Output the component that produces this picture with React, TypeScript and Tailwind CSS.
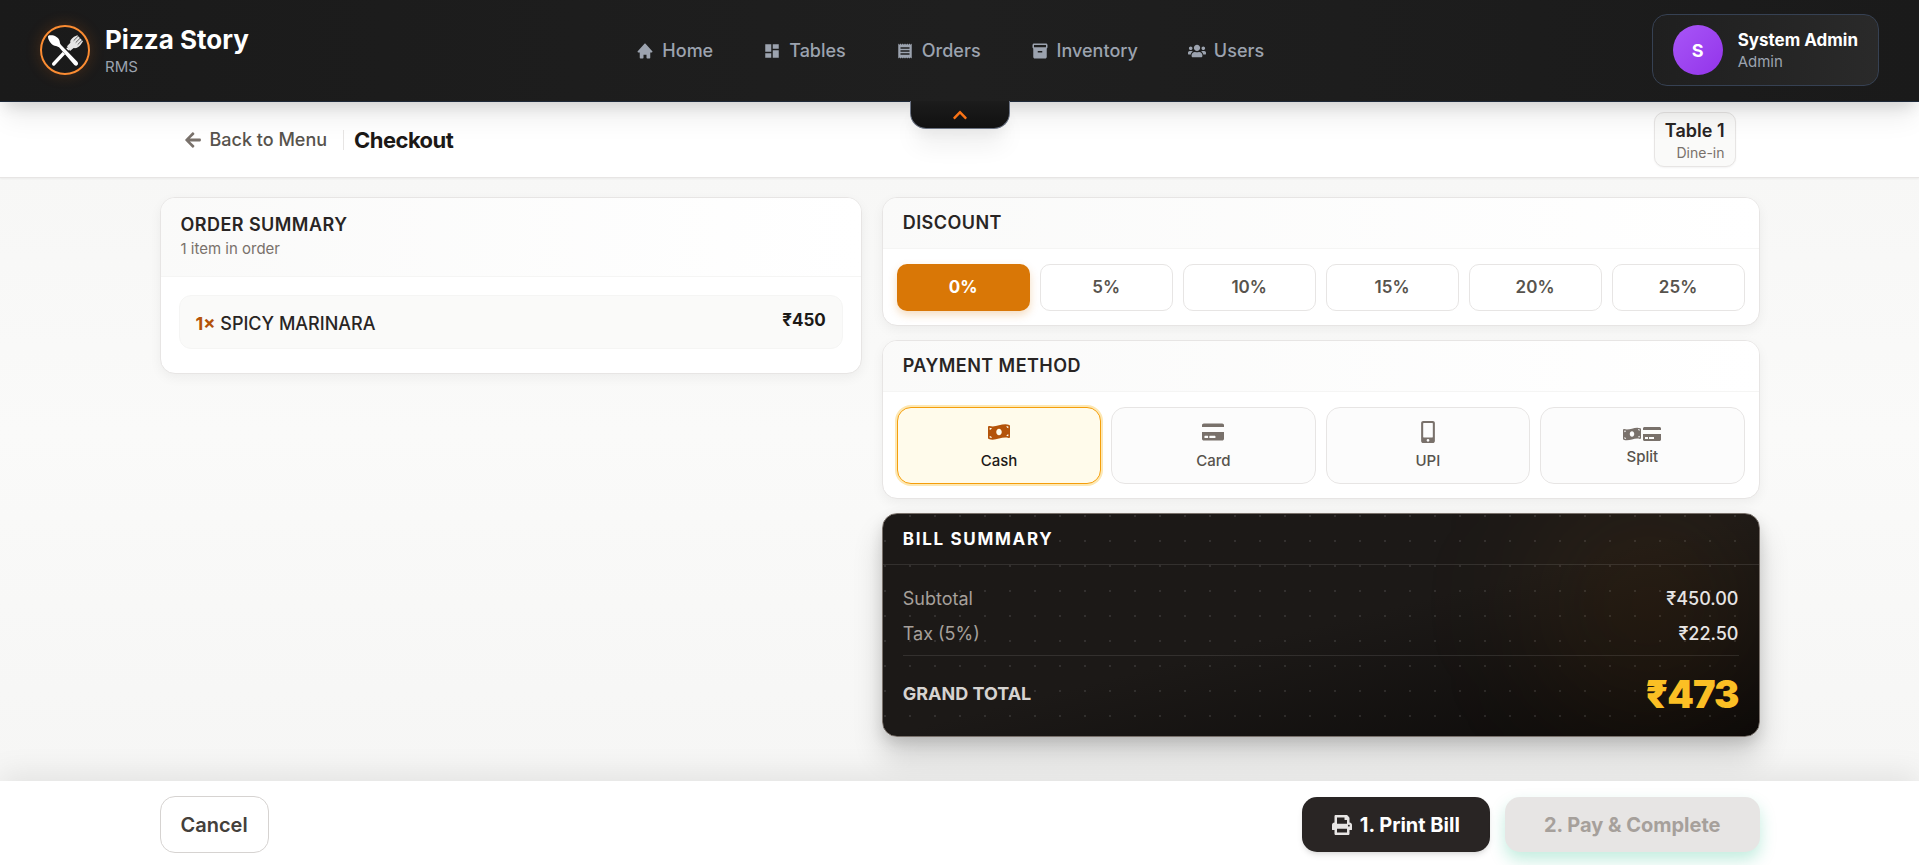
import { useState } from "react";
import { BiSolidHome } from "react-icons/bi";
import {
  FaArrowLeft,
  FaChevronUp,
  FaCreditCard,
  FaMobileAlt,
  FaMoneyBillWave,
  FaPrint,
  FaUsers,
} from "react-icons/fa";
import { MdDashboard, MdInventory2, MdReceipt } from "react-icons/md";

const navItems = [
  { label: "Home", icon: BiSolidHome },
  { label: "Tables", icon: MdDashboard },
  { label: "Orders", icon: MdReceipt },
  { label: "Inventory", icon: MdInventory2 },
  { label: "Users", icon: FaUsers },
];

const discounts = [0, 5, 10, 15, 20, 25];

const paymentMethods = [
  { label: "Cash", gap: "gap-2", icon: <FaMoneyBillWave size={22} /> },
  { label: "Card", gap: "gap-2", icon: <FaCreditCard size={22} /> },
  { label: "UPI", gap: "gap-2", icon: <FaMobileAlt size={22} /> },
  {
    label: "Split",
    gap: "gap-1",
    icon: (
      <>
        <FaMoneyBillWave size={18} />
        <FaCreditCard size={18} />
      </>
    ),
  },
];

const Logo: React.FC = () => (
  <div className="flex size-[50px] items-center justify-center rounded-full border-2 border-[#fb8c32] shadow-[0_0_16px_rgba(249,115,22,0.2)]">
    <svg viewBox="36 36 138 138" className="size-[46px]" fill="none">
      <path
        d="M112 103L71 147"
        stroke="#fff"
        strokeWidth="10"
        strokeLinecap="round"
      />
      <path
        d="M111 94L121 83C119 76 124 71 132 65L142 61L159 79L152 89C146 96 138 101 131 99L120 108Z"
        fill="#e5e5e5"
      />
      <path
        d="M131 77L147 61M137 83L153 67M143 89L159 73"
        stroke="#1a1a1a"
        strokeWidth="2"
      />
      <path d="M87 87L142 147" stroke="#1a1a1a" strokeWidth="15" />
      <path
        d="M54 66C53 60 60 60 67 61C78 63 88 70 89 79C90 84 90 87 94 91L142 140C148 147 140 156 133 150L87 97C82 93 79 94 74 92C64 89 55 77 54 66Z"
        fill="#fff"
      />
    </svg>
  </div>
);

const CardTitle: React.FC<{ children: React.ReactNode }> = ({ children }) => (
  <h2 className="text-[18px] leading-[22px] font-semibold tracking-wide text-[#292524]">
    {children}
  </h2>
);

const Header: React.FC = () => (
  <header className="relative z-20 flex h-[102px] items-center justify-between border-b border-gray-800 bg-linear-to-r from-[#1a1a1a] via-[#1f1f1f] to-[#1a1a1a] px-10 pb-px shadow-[0_20px_25px_-5px_rgba(0,0,0,0.08),0_8px_14px_-4px_rgba(0,0,0,0.12)]">
    <a href="#home" className="flex items-center gap-[15px]">
      <Logo />
      <span className="flex flex-col">
        <span className="text-[26px] leading-[34px] font-bold text-white">
          Pizza Story
        </span>
        <span className="text-[15px] leading-5 text-[#9ca3af]">RMS</span>
      </span>
    </a>

    <nav className="flex items-center gap-[50px] pt-0.5">
      {navItems.map(({ label, icon: Icon }) => (
        <a
          key={label}
          href={`#${label.toLowerCase()}`}
          className="flex items-center gap-2 text-[18px] leading-6 font-medium text-[#9ca3af]"
        >
          <Icon size={18} />
          {label}
        </a>
      ))}
    </nav>

    <button
      type="button"
      className="flex items-center gap-[15px] rounded-[15px] border border-gray-700 bg-linear-to-r from-[#1f1f1f] to-[#2a2a2a] px-5 py-2.5 text-left"
    >
      <span className="flex size-[50px] items-center justify-center rounded-full bg-linear-to-br from-[#a855f7] to-[#9333ea] text-[18px] font-bold text-white">
        S
      </span>
      <span className="flex flex-col">
        <span className="text-[17px] leading-6 font-bold text-white">
          System Admin
        </span>
        <span className="text-[15px] leading-5 text-[#9ca3af]">Admin</span>
      </span>
    </button>

    <button
      type="button"
      aria-label="Collapse header"
      className="absolute top-full left-1/2 flex h-7 w-[100px] -translate-x-1/2 items-center justify-center rounded-b-2xl border border-t-0 border-gray-500 bg-linear-to-b from-[#1c1c1c] to-[#111111] text-[#f97316] shadow-[0_20px_25px_-5px_rgba(0,0,0,0.08),0_8px_14px_-4px_rgba(0,0,0,0.06)]"
    >
      <FaChevronUp size={16} />
    </button>
  </header>
);

export default function App() {
  const [discount, setDiscount] = useState(0);
  const [method, setMethod] = useState("Cash");

  return (
    <div className="flex min-h-screen flex-col bg-linear-to-b from-[#f5f5f4] via-[#fafaf9] to-[#f5f5f4] font-['Inter',sans-serif]">
      <Header />

      <div className="z-10 border-b border-stone-200 bg-white shadow-xs">
        <div className="mx-auto flex h-[75px] max-w-[1600px] items-center justify-between px-6">
          <div className="flex items-center">
            <button
              type="button"
              className="flex items-center gap-2 text-[18px] leading-6 font-medium text-stone-600"
            >
              <FaArrowLeft size={18} className="text-stone-500" />
              Back to Menu
            </button>
            <span className="mr-2.5 ml-4 h-5 w-px bg-stone-200" />
            <h1 className="text-[22px] leading-7 font-bold tracking-tight text-stone-900">
              Checkout
            </h1>
          </div>
          <div className="rounded-[10px] border border-stone-200 bg-stone-50 px-2.5 py-[5px] text-right shadow-xs">
            <p className="text-[18px] leading-[26px] font-semibold text-stone-800">
              Table 1
            </p>
            <p className="text-[14px] leading-[17px] text-stone-500">Dine-in</p>
          </div>
        </div>
      </div>

      <main className="flex-1 pt-[19px] pb-10">
        <div className="mx-auto grid max-w-[1600px] grid-cols-[4fr_5fr] items-start gap-5">
          <section className="overflow-hidden rounded-[15px] border border-stone-200 bg-white shadow-[0_4px_12px_rgba(0,0,0,0.05)]">
            <div className="border-b border-stone-100 bg-linear-to-r from-stone-50 to-white px-5 py-4">
              <CardTitle>ORDER SUMMARY</CardTitle>
              <p className="pt-0.5 text-[15px] leading-[22px] text-stone-500">
                1 item in order
              </p>
            </div>
            <div className="px-[18px] pt-[18px] pb-6">
              <div className="flex items-start justify-between rounded-xl border border-stone-100 bg-stone-50 px-4 py-3">
                <p className="pt-1 text-[18px] leading-6 font-medium text-stone-800">
                  <span className="font-bold text-[#b45309]">1×</span> SPICY
                  MARINARA
                </p>
                <p className="text-[17px] leading-6 font-bold text-stone-900">
                  ₹450
                </p>
              </div>
            </div>
          </section>

          <div className="flex flex-col gap-[14px]">
            <section className="overflow-hidden rounded-[15px] border border-stone-200 bg-white shadow-[0_4px_12px_rgba(0,0,0,0.05)]">
              <div className="border-b border-stone-100 bg-linear-to-r from-stone-50 to-white px-5 py-[14px]">
                <CardTitle>DISCOUNT</CardTitle>
              </div>
              <div className="grid grid-cols-6 gap-2.5 px-[14px] pt-[15px] pb-[14px]">
                {discounts.map((value) => (
                  <button
                    key={value}
                    type="button"
                    aria-pressed={discount === value}
                    onClick={() => setDiscount(value)}
                    className={
                      discount === value
                        ? "h-[47px] rounded-[10px] bg-[#d97706] text-[17px] font-bold text-white shadow-[0_4px_8px_rgba(217,119,6,0.25)]"
                        : "h-[47px] rounded-[10px] border border-stone-200 bg-white text-[17px] font-semibold text-stone-600"
                    }
                  >
                    {value}%
                  </button>
                ))}
              </div>
            </section>

            <section className="overflow-hidden rounded-[15px] border border-stone-200 bg-white shadow-[0_4px_12px_rgba(0,0,0,0.05)]">
              <div className="border-b border-stone-100 bg-linear-to-r from-stone-50 to-white px-5 py-[14px]">
                <CardTitle>PAYMENT METHOD</CardTitle>
              </div>
              <div className="grid grid-cols-4 gap-2.5 px-[14px] pt-[15px] pb-[14px]">
                {paymentMethods.map(({ label, gap, icon }) => (
                  <button
                    key={label}
                    type="button"
                    aria-pressed={method === label}
                    onClick={() => setMethod(label)}
                    className={`flex h-[77px] flex-col items-center justify-center rounded-[14px] border text-[15px] leading-5 font-medium ${gap} ${
                      method === label
                        ? "border-[#f59e0b] bg-[#fffbeb] text-stone-900 ring-2 ring-[#fde8b4]"
                        : "border-stone-200 bg-[#fcfcfc] text-stone-600"
                    }`}
                  >
                    <span
                      className={
                        method === label
                          ? "flex gap-0.5 text-[#b45309]"
                          : "flex gap-0.5 text-stone-500"
                      }
                    >
                      {icon}
                    </span>
                    {label}
                  </button>
                ))}
              </div>
            </section>

            <section className="relative overflow-hidden rounded-[15px] border border-stone-500 bg-linear-to-br from-[#1c1917] via-[#1c1917] to-[#0c0a09] shadow-[0_20px_30px_rgba(0,0,0,0.16),0_6px_14px_rgba(0,0,0,0.12)]">
              <div className="pointer-events-none absolute inset-0 bg-[radial-gradient(circle_at_2px_2px,rgba(255,255,255,0.1)_1px,transparent_0)] bg-size-[25px_25px]" />
              <div className="pointer-events-none absolute -top-5 right-0 size-[220px] rounded-full bg-[#d97706]/8 blur-3xl" />
              <div className="relative border-b border-white/10 px-5 py-[14px]">
                <h2 className="text-[17px] leading-[22px] font-bold tracking-widest text-white">
                  BILL SUMMARY
                </h2>
              </div>
              <div className="relative px-5 pt-4 pb-5">
                <dl className="flex flex-col text-[18px] leading-[35px]">
                  <div className="flex justify-between">
                    <dt className="text-stone-400">Subtotal</dt>
                    <dd className="font-medium text-stone-200">₹450.00</dd>
                  </div>
                  <div className="flex justify-between">
                    <dt className="text-stone-400">Tax (5%)</dt>
                    <dd className="font-medium text-stone-200">₹22.50</dd>
                  </div>
                </dl>
                <div className="mt-1 flex items-center justify-between border-t border-white/10 pt-4">
                  <p className="text-[18px] leading-6 font-bold text-stone-300">
                    GRAND TOTAL
                  </p>
                  <p className="text-[38px] leading-[44px] font-black tracking-tight text-[#fbbf24]">
                    ₹473
                  </p>
                </div>
              </div>
            </section>
          </div>
        </div>
      </main>

      <footer className="z-10 bg-white shadow-[0_-8px_30px_rgba(0,0,0,0.08)]">
        <div className="mx-auto flex max-w-[1600px] items-center justify-between pt-[15px] pb-3">
          <button
            type="button"
            className="h-[57px] rounded-[15px] border border-stone-300 bg-white px-5 text-[20px] font-semibold text-stone-700"
          >
            Cancel
          </button>
          <div className="flex gap-[15px]">
            <button
              type="button"
              className="flex h-[55px] items-center gap-2 rounded-[15px] bg-stone-800 px-[30px] text-[20px] font-bold text-white shadow-md"
            >
              <FaPrint size={20} className="text-stone-200" />
              1. Print Bill
            </button>
            <button
              type="button"
              disabled
              className="h-[55px] rounded-[15px] bg-stone-200 px-[39px] text-[20px] font-bold text-stone-400 shadow-[0_8px_16px_rgba(16,185,129,0.25)]"
            >
              2. Pay &amp; Complete
            </button>
          </div>
        </div>
      </footer>
    </div>
  );
}
